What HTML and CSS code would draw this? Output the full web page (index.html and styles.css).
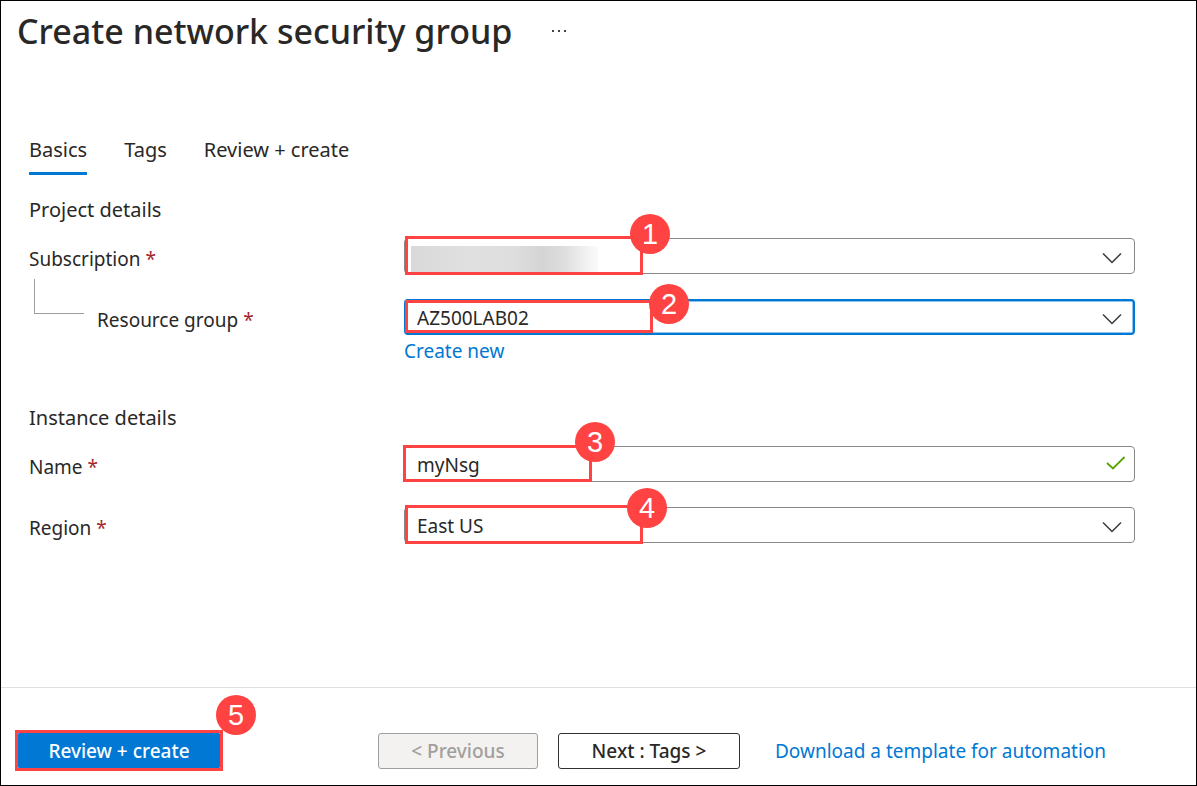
FILE: index.html
```html
<!DOCTYPE html>
<html lang="en">
<head>
<meta charset="utf-8">
<meta name="viewport" content="width=device-width, initial-scale=1">
<title>Create network security group</title>
<link rel="stylesheet" href="styles.css">
</head>
<body>
<div class="frame">
  <header class="header">
    <h1 class="title">Create network security group</h1>
    <button class="more" type="button" aria-label="More actions">
      <svg width="18" height="4" viewBox="0 0 18 4" fill="#444"><rect x="2" y="1" width="2" height="2"/><rect x="8" y="1" width="2" height="2"/><rect x="14" y="1" width="2" height="2"/></svg>
    </button>
  </header>
  <nav class="tabs">
    <a class="tab tab-active" href="#basics">Basics</a>
    <a class="tab" href="#tags">Tags</a>
    <a class="tab" href="#review">Review + create</a>
  </nav>
  <form class="form" id="nsg">
    <section class="section">
      <h2 class="section-title">Project details</h2>
      <div class="row">
        <label class="label" for="subscription">Subscription <span class="required">*</span></label>
        <div class="field">
          <select class="control" id="subscription"><option></option></select>
          <span class="redacted"></span>
          <svg class="chevron" width="20" height="12" viewBox="0 0 20 12"><path d="M1 1.500L10 10.500L19 1.500"/></svg>
          <div class="mark mark-subscription"><span class="badge">1</span></div>
        </div>
      </div>
      <div class="row">
        <label class="label label-child" for="group">Resource group <span class="required">*</span></label>
        <div class="field">
          <select class="control control-focus" id="group"><option>AZ500LAB02</option></select>
          <svg class="chevron" width="20" height="12" viewBox="0 0 20 12"><path d="M1 1.500L10 10.500L19 1.500"/></svg>
          <div class="mark mark-group"><span class="badge">2</span></div>
        </div>
      </div>
      <a class="link create-new" href="#new">Create new</a>
    </section>
    <section class="section">
      <h2 class="section-title">Instance details</h2>
      <div class="row">
        <label class="label" for="name">Name <span class="required">*</span></label>
        <div class="field">
          <input class="control" id="name" type="text" value="myNsg">
          <svg class="check" width="20" height="14" viewBox="0 0 20 14"><path d="M1 7L7 12.500L18.500 1"/></svg>
          <div class="mark mark-name"><span class="badge">3</span></div>
        </div>
      </div>
      <div class="row">
        <label class="label" for="region">Region <span class="required">*</span></label>
        <div class="field">
          <select class="control" id="region"><option>East US</option></select>
          <svg class="chevron" width="20" height="12" viewBox="0 0 20 12"><path d="M1 1.500L10 10.500L19 1.500"/></svg>
          <div class="mark mark-region"><span class="badge">4</span></div>
        </div>
      </div>
    </section>
  </form>
  <footer class="footer">
    <div class="primary-slot">
      <button class="button button-primary" type="submit" form="nsg">Review + create</button>
      <div class="mark mark-review"><span class="badge">5</span></div>
    </div>
    <button class="button button-previous" type="button" disabled>&lt; Previous</button>
    <button class="button button-next" type="button">Next : Tags &gt;</button>
    <a class="link download" href="#template">Download a template for automation</a>
  </footer>
</div>
</body>
</html>
```
FILE: styles.css
```css
* { box-sizing: border-box; }

body {
  margin: 0;
  background: #fff;
  color: #292827;
  font-family: "Noto Sans", "Open Sans", sans-serif;
  font-size: 19px;
  line-height: 28px;
}

.frame {
  display: flex;
  flex-direction: column;
  min-height: 100vh;
  border: 1px solid #000;
}

.header {
  display: flex;
  align-items: center;
  gap: 38px;
  padding: 6px 16px 0;
}

.title {
  margin: 0;
  font-size: 34px;
  font-weight: 500;
  line-height: 48px;
}

.more {
  display: flex;
  padding: 0;
  border: 0;
  background: none;
}

.tabs {
  display: flex;
  gap: 37px;
  padding: 81px 28px 0;
  font-size: 20px;
}

.tab {
  height: 39px;
  color: inherit;
  text-decoration: none;
}

.tab-active {
  border-bottom: 3px solid #0078d4;
}

.form {
  display: flex;
  flex-direction: column;
  flex: 1;
  gap: 39px;
  padding: 21px 61px 32px 28px;
}

.section {
  display: flex;
  flex-direction: column;
}

.section-title {
  margin: 0 0 14px;
  font-size: 20px;
  font-weight: 400;
  line-height: 28px;
}

.row {
  display: grid;
  grid-template-columns: 375px 1fr;
  align-items: center;
}

.row + .row { margin-top: 25px; }

.label { padding-top: 6px; }

.label-child {
  position: relative;
  padding-left: 68px;
}

.label-child::before {
  content: "";
  position: absolute;
  left: 5px;
  bottom: 20px;
  width: 49px;
  height: 34px;
  border: solid #a19f9d;
  border-width: 0 0 1px 1px;
}

.required { color: #a4262c; }

.field { position: relative; }

.control {
  display: block;
  width: 100%;
  height: 36px;
  padding: 2px 44px 0 12px;
  border: 1px solid #8a8886;
  border-radius: 4px;
  appearance: none;
  background: #fff;
  color: inherit;
  font: inherit;
}

.control-focus {
  padding-left: 11px;
  border: 2px solid #0078d4;
  box-shadow: inset 0 0 0 1px #8cc3ec;
}

.redacted {
  position: absolute;
  top: 8px;
  left: 7px;
  width: 187px;
  height: 26px;
  background: linear-gradient(90deg, #d9d9d9, #e0e0e0 30%, #dedede 55%, #d4d4d4 70%, #dedede 82%, #f2f2f2 94%, #fafafa);
}

.chevron,
.check {
  position: absolute;
  fill: none;
  pointer-events: none;
}

.chevron {
  top: 14px;
  right: 13px;
  stroke: #3b3a39;
  stroke-width: 1.5;
}

.check {
  top: 10px;
  right: 9px;
  stroke: #57a300;
  stroke-width: 1.8;
}

.create-new {
  align-self: flex-start;
  margin: 2px 0 0 375px;
}

.link {
  color: #0078d4;
  text-decoration: none;
}

.mark {
  position: absolute;
  border: 3px solid #ff4343;
  pointer-events: none;
}

.mark-subscription,
.mark-region {
  top: -2px;
  left: 1px;
  width: 238px;
  height: 39px;
}

.mark-group {
  top: 1px;
  left: 1px;
  width: 248px;
  height: 33px;
}

.mark-name {
  top: -1px;
  left: -1px;
  width: 189px;
  height: 37px;
}

.mark-review {
  inset: -3px;
}

.badge {
  position: absolute;
  top: -25px;
  right: -30px;
  width: 40px;
  height: 40px;
  border-radius: 50%;
  background: #ff4343;
  color: #fff;
  font-family: "Liberation Sans", Arial, sans-serif;
  font-size: 29px;
  line-height: 40px;
  text-align: center;
}

.mark-group .badge { top: -19px; right: -39px; }
.mark-name .badge { top: -26px; right: -26px; }
.mark-region .badge { top: -20px; right: -27px; }
.mark-review .badge { top: -38px; right: -36px; }

.footer {
  display: flex;
  align-items: flex-start;
  padding: 45px 16px 16px 17px;
  border-top: 1px solid #e1dfdd;
}

.primary-slot {
  position: relative;
  margin-right: 158px;
}

.button {
  height: 36px;
  padding: 0;
  border: 1px solid #323130;
  border-radius: 3px;
  background: #fff;
  color: #292827;
  font: inherit;
  font-weight: 500;
}

.button-primary {
  display: block;
  width: 202px;
  height: 35px;
  border-color: #0078d4;
  border-radius: 1px;
  background: #0078d4;
  color: #fff;
}

.button-previous {
  width: 160px;
  margin-right: 20px;
  border-color: #a19f9d;
  background: #f3f2f1;
  color: #a19f9d;
}

.button-next {
  width: 182px;
  margin-right: 35px;
}

.download { align-self: center; }
```
